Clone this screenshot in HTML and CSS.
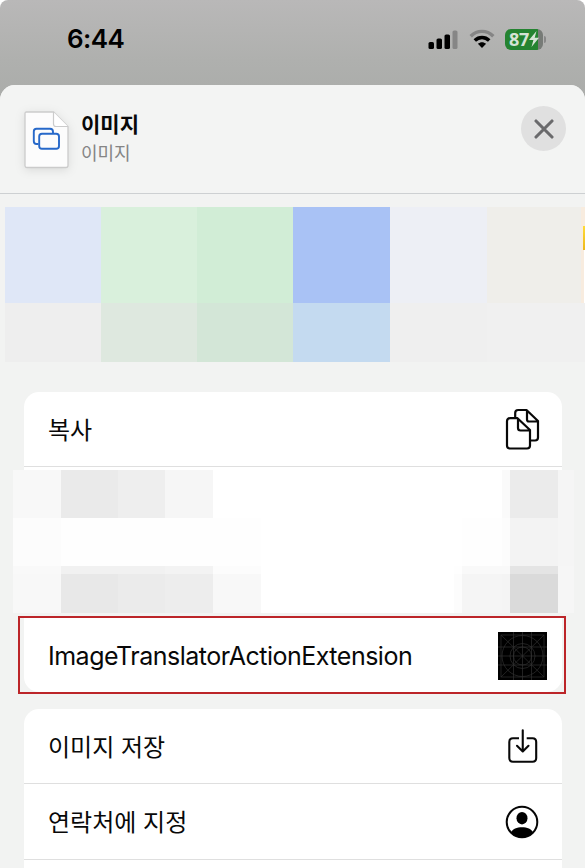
FILE: index.html
```html
<!DOCTYPE html>
<html lang="ko">
<head>
<meta charset="utf-8">
<title>이미지</title>
<link rel="stylesheet" href="styles.css">
</head>
<body>
<div class="screen">
  <div class="statusbar">
    <span class="time">6:44</span>
    <div class="indicators">
      <svg class="signal" width="30" height="19" viewBox="0 0 30 19">
        <rect x="0.5" y="12" width="5.5" height="7" rx="1.6"/>
        <rect x="8.5" y="8.5" width="5.5" height="10.5" rx="1.6"/>
        <rect x="16.5" y="4.5" width="5.5" height="14.5" rx="1.6"/>
        <rect x="24.5" y="0.5" width="5" height="18.5" rx="1.6" fill="#868686"/>
      </svg>
      <svg class="wifi" width="26" height="20" viewBox="0 0 26 20">
        <path d="M1.7 7.2C8.1 .8 17.9 .8 24.3 7.2" fill="none" stroke="#858585" stroke-width="3.4"/>
        <path d="M5.8 11.4C10 7.4 16 7.4 20.2 11.4" fill="none" stroke="#000" stroke-width="3.5"/>
        <path d="M8.9 14.8C11.3 12.6 14.7 12.6 17.1 14.8L13 19Z"/>
      </svg>
      <div class="battery">
        <div class="battery-body"><span>87</span>
          <svg width="10" height="16" viewBox="0 0 10 16"><path d="M7.5 0 0 9H4.4L2.5 16 10 6.8H5.7Z" fill="#d5e3d5"/></svg>
        </div>
        <div class="battery-cap"></div>
      </div>
    </div>
  </div>

  <div class="sheet">
    <header class="sheet-header">
      <svg class="file" width="46" height="58" viewBox="0 0 46 58">
        <path d="M2.5 1H29.5L44 15.500V54.500Q44 56.500 42 56.500H3Q1 56.500 1 54.500V2.500Q1 1 2.500 1Z" fill="#fcfcfc" stroke="#cbcbcb" stroke-width="1.3"/>
        <path d="M29.500 1V13Q29.500 15.500 32 15.500H44" fill="#fff" stroke="#cbcbcb" stroke-width="1.2"/>
        <path d="M14.500 33H12.500Q9.800 33 9.800 30.300V20.500Q9.800 17.800 12.500 17.800H26Q29 17.800 29 20.800V22.500" fill="none" stroke="#2668c9" stroke-width="1.900"/>
        <rect x="15.200" y="22.700" width="19.800" height="15" rx="2.800" fill="none" stroke="#2668c9" stroke-width="1.900"/>
      </svg>
      <div class="titles">
        <h1>이미지</h1>
        <p>이미지</p>
      </div>
      <button class="close" aria-label="닫기">
        <svg width="20" height="20" viewBox="0 0 20 20"><path d="M2 2 18 18M18 2 2 18" stroke="#6a6a6c" stroke-width="3.100" stroke-linecap="round"/></svg>
      </button>
    </header>

    <div class="apps">
      <i class="a1"></i><i class="a2"></i><i class="a3"></i><i class="a4"></i><i class="a5"></i><i class="a6"></i><i class="peek"></i>
      <i class="b1"></i><i class="b2"></i><i class="b3"></i><i class="b4"></i><i class="b5"></i><i class="b6"></i><i class="b7"></i>
    </div>

    <section class="card card-top">
      <div class="row">
        <span class="label">복사</span>
        <svg width="36" height="42" viewBox="0 0 36 42" fill="none" stroke="#080808" stroke-width="2.200" stroke-linejoin="round">
          <path d="M10.200 9V5Q10.200 2 13.200 2H21.500L33 13V29.500Q33 32.500 30 32.500H26M22 2V11.500Q22 13.500 24 13.500H33"/>
          <path d="M5 10.200H12.500L25 22V37.500Q25 40.500 22 40.500H5Q2 40.500 2 37.500V13.200Q2 10.200 5 10.200ZM13 10.200V20Q13 22.500 15.500 22.500H25"/>
        </svg>
      </div>
    </section>

    <div class="redacted">
      <i class="g8"></i><i class="ga"></i><i class="ge"></i><i class="g6"></i><i></i><i></i><i></i><i></i><i class="gfa"></i><i class="gb"></i><i class="g5"></i>
      <i class="gfb"></i><i class="gfe"></i><i class="gfe"></i><i class="gfe"></i><i class="gfe"></i><i></i><i></i><i class="gfe"></i><i class="gfb"></i><i class="g3"></i><i class="g5"></i>
      <i class="g9"></i><i class="g2"></i><i class="g2"></i><i class="g3"></i><i class="gfb"></i><i></i><i class="gfe"></i><i class="g9"></i><i class="g9"></i><i class="gd"></i><i class="g6"></i>
      <i class="g8"></i><i class="g99"></i><i class="gb"></i><i class="gc"></i><i class="g8"></i><i></i><i class="gfb"></i><i class="g5"></i><i class="g4"></i><i class="gx"></i><i class="g6"></i>
    </div>

    <div class="highlight">
      <div class="row">
        <span class="latin">ImageTranslatorActionExtension</span>
        <svg class="grid-icon" width="49" height="48" viewBox="0 0 49 48" fill="none" stroke="#303030" stroke-width=".7">
          <rect width="49" height="48" fill="#000" stroke="none"/>
          <rect x="3" y="3" width="43" height="42"/>
          <path d="M3 3 46 45M46 3 3 45M24.500 0V48M0 24H49M15.500 0V48M33.500 0V48M0 15H49M0 33H49"/>
          <circle cx="24.500" cy="24" r="20.500"/><circle cx="24.500" cy="24" r="12.500"/><circle cx="24.500" cy="24" r="9"/>
        </svg>
      </div>
    </div>

    <section class="card card-bottom">
      <div class="row">
        <span class="label">이미지 저장</span>
        <svg width="32" height="36" viewBox="0 0 32 36" fill="none" stroke="#080808" stroke-width="2.100" stroke-linecap="butt" stroke-linejoin="round">
          <path d="M12 10.300H6Q2.300 10.300 2.300 14V30Q2.300 33.700 6 33.700H25.500Q29.200 33.700 29.200 30V14Q29.200 10.300 25.500 10.300H19.700"/>
          <path stroke-linecap="round" d="M15.750 2.200V23M10 17.800 15.750 23.500 21.500 17.800"/>
        </svg>
      </div>
      <div class="row">
        <span class="label">연락처에 지정</span>
        <svg width="34" height="34" viewBox="0 0 34 34">
          <circle cx="17" cy="17" r="15.300" fill="none" stroke="#050505" stroke-width="2"/>
          <ellipse cx="17" cy="13.200" rx="5.500" ry="6.200"/>
          <path d="M6 27.500C8.500 20.500 25.500 20.500 28 27.500Q23.500 32.500 17 32.500T6 27.500Z"/>
        </svg>
      </div>
      <div class="row"></div>
    </section>
  </div>
</div>
</body>
</html>
```

FILE: styles.css
```css
* { box-sizing: border-box; }
body {
  margin: 0;
  background: #fff;
  color: #080808;
  font-family: Inter, "Noto Sans CJK KR", sans-serif;
}
.screen {
  width: 585px;
  height: 868px;
  overflow: hidden;
  border-radius: 8px 8px 0 0;
  background: linear-gradient(#b9b8b8 0, #afb0ae 60px, #a9aba8 110px);
}
.statusbar {
  display: flex;
  justify-content: space-between;
  align-items: center;
  height: 85px;
  padding: 0 39px 7px 67px;
}
.time { font-size: 26px; font-weight: 600; line-height: 30px; letter-spacing: -0.6px; color: #000; }
.indicators { display: flex; align-items: center; }
.wifi { margin-left: 11px; }
.battery { display: flex; align-items: center; margin-left: 10px; }
.battery-body {
  display: flex;
  align-items: center;
  width: 38px;
  height: 21px;
  padding-left: 4px;
  border-radius: 6px;
  background: linear-gradient(90deg, #248331 33px, #777b77 33px);
  color: #d5e3d5;
  font: 700 18px/21px "Open Sans", sans-serif;
  letter-spacing: -0.3px;
}
.battery-cap { width: 2px; height: 7px; margin-left: 1px; border-radius: 0 3px 3px 0; background: #888; }

.sheet {
  height: 783px;
  border-radius: 15px 15px 0 0;
  background: #f2f3f2;
  overflow: hidden;
}
.sheet-header {
  display: flex;
  height: 109px;
  padding: 25px 19px 0 24px;
  border-bottom: 1px solid #cdd0d2;
  background: #f3f4f3;
}
.file { flex: none; margin-top: 1px; filter: drop-shadow(0 2px 5px rgba(0, 0, 0, .1)); }
.titles { flex: 1; padding-left: 11px; }
.titles h1 { margin: 0; font-size: 21px; font-weight: 700; line-height: 30px; }
.titles p { margin: 0; font-size: 18px; line-height: 27px; color: #858585; }
.close {
  display: flex;
  align-items: center;
  justify-content: center;
  width: 45px;
  height: 45px;
  margin-top: -4px;
  padding: 0;
  border: 0;
  border-radius: 50%;
  background: #e0e0e0;
}

.apps {
  display: grid;
  grid-template-columns: 96px 96px 96.3px 96.3px 97px 94.4px 4px;
  grid-template-rows: 96px 59px;
  padding: 13px 0 30px 5px;
}
.a1 { background: #dfe7f7; }
.a2 { background: #d9f0dc; }
.a3 { background: #d1edd6; }
.a4 { background: #a9c2f5; }
.a5 { background: #edeff5; }
.a6 { background: #efeeea; }
.peek {
  background: linear-gradient(#ffdb38, #edb81b) 2px 19px / 2px 24px no-repeat,
    linear-gradient(#fff, #fff) 3px 43px / 1px 53px no-repeat, #f8ecdf;
}
.b1 { background: #eee; }
.b2 { background: #dee8df; }
.b3 { background: #d3e6d7; }
.b4 { background: #c4daf0; }
.b5 { background: #efefef; }
.b6, .b7 { background: #f0f0f0; }

.card { margin: 0 23px 0 24px; background: #fff; }
.card-top { height: 78px; border-radius: 15px 15px 0 0; }
.card-bottom { margin-top: 15px; border-radius: 15px 15px 0 0; }
.row {
  display: flex;
  justify-content: space-between;
  align-items: center;
  height: 75px;
  padding: 0 21.5px 0 24px;
  font-size: 24px;
}
.label { padding-bottom: 2px; }
.card .row { border-bottom: 1px solid #dfdfdf; }
.card-bottom .row { height: 76px; padding-right: 23px; }
.card-bottom .row:first-child { height: 75px; }

.redacted {
  display: grid;
  grid-template-columns: 48px 57px 47px 48px 48px 193px 8px 40px 8px 48px 16px;
  grid-template-rows: 48px 48px 8px 39px;
  width: 561px;
  margin-left: 13px;
  background: #fff;
}
.gfe { background: #fefefe; }
.gfb { background: #fcfcfc; }
.gfa { background: #fafafa; }
.g9 { background: #f9f9f9; }
.g8 { background: #f8f8f8; }
.g6 { background: #f6f6f6; }
.g5 { background: #f5f5f5; }
.g4 { background: #f4f4f4; }
.g3 { background: #f3f3f3; }
.g2 { background: #f1f1f1; }
.ge { background: #eee; }
.gc { background: #ededed; }
.gb { background: #ebebeb; }
.ga { background: #eaeaea; }
.g99 { background: #e8e8e8; }
.gd { background: #e4e4e4; }
.gx { background: #dadada; }

.highlight {
  width: 548px;
  height: 78px;
  margin: 3px 0 0 18px;
  border: 2px solid #bc2529;
  padding: 0 2px 0 4px;
}
.highlight .row {
  height: 74px;
  padding: 2px 15px 0 24px;
  border-radius: 0 0 15px 15px;
  background: #fff;
}
.latin { font-size: 25px; letter-spacing: -0.5px; }
```
